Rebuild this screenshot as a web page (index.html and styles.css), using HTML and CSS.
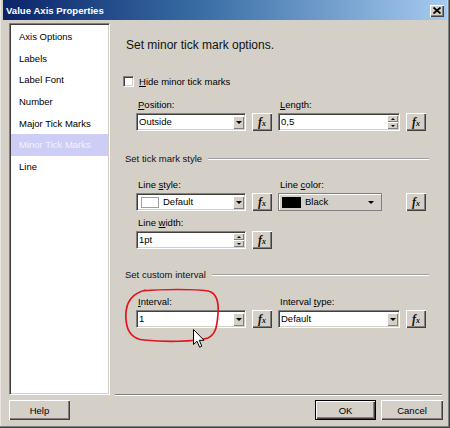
FILE: index.html
```html
<!DOCTYPE html>
<html>
<head>
<meta charset="utf-8">
<link rel="stylesheet" href="styles.css">
</head>
<body>
<div class="dialog">
  <div class="titlebar">
    <span class="title">Value Axis Properties</span>
    <span class="close"><svg width="8" height="7" viewBox="0 0 8 7"><path d="M0.5 0.5 L7.5 6.5 M7.5 0.5 L0.5 6.5" stroke="#000" stroke-width="1.8"/></svg></span>
  </div>
  <div class="main">
    <ul class="nav">
      <li>Axis Options</li>
      <li>Labels</li>
      <li>Label Font</li>
      <li>Number</li>
      <li>Major Tick Marks</li>
      <li class="sel">Minor Tick Marks</li>
      <li>Line</li>
    </ul>
    <div class="content">
      <div class="heading">Set minor tick mark options.</div>
      <div class="check"><span class="box"></span><span><u>H</u>ide minor tick marks</span></div>

      <div class="row r1">
        <div class="field">
          <div class="lbl"><u>P</u>osition:</div>
          <div class="combo"><span class="val">Outside</span><span class="drop"><i class="tri"></i></span></div>
        </div>
        <div class="fx"><span class="f">f</span><span class="x">x</span></div>
        <div class="field">
          <div class="lbl"><u>L</u>ength:</div>
          <div class="combo"><span class="val">0,5</span><span class="spin"><span class="half"><i class="up"></i></span><span class="half"><i class="tri"></i></span></span></div>
        </div>
        <div class="fx"><span class="f">f</span><span class="x">x</span></div>
      </div>

      <div class="section s1"><span>Set tick mark style</span></div>

      <div class="row r2">
        <div class="field">
          <div class="lbl">Line <u>s</u>tyle:</div>
          <div class="combo"><span class="swatch white"></span><span class="val">Default</span><span class="drop"><i class="tri"></i></span></div>
        </div>
        <div class="fx"><span class="f">f</span><span class="x">x</span></div>
        <div class="field">
          <div class="lbl">Line <u>c</u>olor:</div>
          <div class="colorpick"><span class="swatch black"></span><span class="val">Black</span><i class="tri"></i></div>
        </div>
        <div class="fx"><span class="f">f</span><span class="x">x</span></div>
      </div>

      <div class="row r3">
        <div class="field">
          <div class="lbl">Line <u>w</u>idth:</div>
          <div class="combo"><span class="val">1pt</span><span class="spin"><span class="half"><i class="up"></i></span><span class="half"><i class="tri"></i></span></span></div>
        </div>
        <div class="fx"><span class="f">f</span><span class="x">x</span></div>
      </div>

      <div class="section s2"><span>Set custom interval</span></div>

      <div class="row r4">
        <div class="field">
          <div class="lbl"><u>I</u>nterval:</div>
          <div class="combo"><span class="val">1</span><span class="drop"><i class="tri"></i></span></div>
        </div>
        <div class="fx"><span class="f">f</span><span class="x">x</span></div>
        <div class="field">
          <div class="lbl">Interval <u>t</u>ype:</div>
          <div class="combo"><span class="val">Default</span><span class="drop"><i class="tri"></i></span></div>
        </div>
        <div class="fx"><span class="f">f</span><span class="x">x</span></div>
      </div>
    </div>
  </div>
  <div class="footer">
    <div class="btn help">Help</div>
    <div class="spacer"></div>
    <div class="btn ok">OK</div>
    <div class="btn cancel">Cancel</div>
  </div>

  <svg class="annot" width="98" height="56" viewBox="0 0 98 56">
    <path d="M18 3 C40 1 70 1 84 3 C93 5 95 14 94 26 C93 38 92 46 84 50 C70 54 40 54 20 52 C8 51 3 44 2 32 C1 20 4 6 22 2" fill="none" stroke="#e0141e" stroke-width="1.7"/>
  </svg>
  <svg class="cursor" width="13" height="20" viewBox="0 0 13 20">
    <path d="M0.5 0.5 L0.5 15.5 L4 12.2 L6.6 18.2 L8.8 17.2 L6.3 11.3 L11 11.3 Z" fill="#fff" stroke="#000" stroke-width="1"/>
  </svg>
</div>
</body>
</html>
```

FILE: styles.css
```css
* { box-sizing: border-box; }
html, body { margin: 0; padding: 0; }
body {
  font-family: "Liberation Sans", Arial, sans-serif;
  font-size: 9.5px;
  color: #000;
  background: #d4d0c8;
}
.dialog {
  position: relative;
  width: 450px;
  height: 428px;
  background: #d4d0c8;
  padding: 0 3px 3px 3px;
  display: flex;
  flex-direction: column;
  box-shadow: inset -1px -1px #404040, inset -2px -2px #808080, inset 1px 0 #e8e6e0;
  overflow: hidden;
}
.titlebar {
  height: 20px;
  flex: none;
  background: linear-gradient(to right, #0a246a 0%, #3a6ea5 45%, #a6caf0 100%);
  display: flex;
  align-items: center;
  padding: 1px 2px 0 3px;
}
.title {
  color: #fff;
  font-weight: bold;
  font-size: 9.6px;
  flex: 1;
}
.close {
  width: 14px;
  height: 12px;
  background: #d4d0c8;
  box-shadow: inset 1px 1px #fff, inset -1px -1px #404040, inset -2px -2px #808080;
  display: flex;
  align-items: center;
  justify-content: center;
  margin-right: 1px;
}
.close svg { display: block; }
.main {
  flex: none;
  height: 375px;
  display: flex;
  gap: 5px;
  padding: 3px 5px 0 6px;
}
.nav {
  list-style: none;
  margin: 0;
  padding: 2px 0 0 0;
  width: 101px;
  height: 372px;
  background: #fff;
  border-top: 1px solid #808080;
  border-left: 1px solid #808080;
  border-right: 1px solid #fff;
  border-bottom: 1px solid #fff;
  box-shadow: inset 1px 1px #404040, inset -1px -1px #d4d0c8;
}
.nav li {
  height: 21.7px;
  line-height: 21.7px;
  padding-left: 8px;
  white-space: nowrap;
  margin: 0 1px 0 1px;
}
.nav li.sel {
  background: #cdcdf6;
  color: #f2f2ff;
}
.content {
  flex: 1;
  height: 372px;
  border-bottom: 1px solid #808080;
  box-shadow: 0 1px #fff;
  display: flex;
  flex-direction: column;
}
.heading {
  font-size: 12px;
  line-height: 14px;
  margin-top: 15px;
  padding-left: 11px;
  color: #111;
}
.check {
  display: flex;
  align-items: center;
  margin-top: 23px;
  padding-left: 8px;
  height: 12px;
  gap: 5px;
}
.box {
  width: 11px;
  height: 11px;
  background: #fff;
  border-top: 1px solid #808080;
  border-left: 1px solid #808080;
  border-right: 1px solid #fff;
  border-bottom: 1px solid #fff;
  box-shadow: inset 1px 1px #404040, inset -1px -1px #d4d0c8;
}
.row {
  display: grid;
  grid-template-columns: 110px 20px 122px 22px;
  column-gap: 6px;
  padding-left: 21px;
}
.r1 { margin-top: 12px; }
.r2 { margin-top: 14px; }
.r3 { margin-top: 6px; }
.r4 { margin-top: 15px; }
.field {
  display: flex;
  flex-direction: column;
}
.lbl {
  line-height: 12px;
  height: 12px;
  margin-bottom: 2px;
  padding-left: 2px;
  white-space: nowrap;
}
.combo {
  height: 18px;
  background: #fff;
  border-top: 1px solid #808080;
  border-left: 1px solid #808080;
  border-right: 1px solid #fff;
  border-bottom: 1px solid #fff;
  box-shadow: inset 1px 1px #404040, inset -1px -1px #d4d0c8;
  display: flex;
  align-items: center;
  padding: 1px 1px 1px 2px;
}
.val {
  flex: 1;
  white-space: nowrap;
  line-height: 14px;
}
.drop {
  width: 11px;
  height: 13px;
  background: #d4d0c8;
  box-shadow: inset 1px 1px #fff, inset -1px -1px #808080;
  display: flex;
  align-items: center;
  justify-content: center;
  flex: none;
}
.tri {
  display: block;
  width: 0;
  height: 0;
  border-left: 3px solid transparent;
  border-right: 3px solid transparent;
  border-top: 3px solid #000;
}
.up {
  display: block;
  width: 0;
  height: 0;
  border-left: 2px solid transparent;
  border-right: 2px solid transparent;
  border-bottom: 2px solid #000;
}
.spin .tri {
  border-left-width: 2px;
  border-right-width: 2px;
  border-top-width: 2px;
}
.spin {
  width: 11px;
  height: 14px;
  display: flex;
  flex-direction: column;
  flex: none;
}
.half {
  flex: 1;
  background: #d4d0c8;
  box-shadow: inset 1px 1px #fff, inset -1px -1px #808080;
  display: flex;
  align-items: center;
  justify-content: center;
}
.swatch {
  flex: none;
  width: 18px;
  height: 11px;
  margin-right: 4px;
}
.swatch.white {
  background: #fff;
  border: 1px solid #a0a0a0;
  margin-left: 2px;
}
.swatch.black {
  background: #000;
  width: 19px;
  height: 11px;
}
.colorpick {
  width: 104px;
  height: 18px;
  background: #d4d0c8;
  border: 1px solid #808080;
  box-shadow: inset 1px 1px #fff;
  display: flex;
  align-items: center;
  padding: 0 7px 0 3px;
}
.fx {
  align-self: end;
  width: 20px;
  height: 18px;
  background: #d4d0c8;
  box-shadow: inset 1px 1px #fff, inset -1px -1px #404040, inset -2px -2px #808080;
  display: flex;
  align-items: center;
  justify-content: center;
  font-family: "Liberation Serif", "Times New Roman", serif;
  font-style: italic;
  font-weight: bold;
  color: #111;
  padding-bottom: 1px;
}
.fx .f { font-size: 12px; line-height: 12px; }
.fx .x { font-size: 8px; line-height: 8px; margin-top: 4px; margin-left: 0; }
.section {
  display: flex;
  align-items: center;
  line-height: 12px;
  height: 12px;
  padding-left: 10px;
  margin-right: 13px;
  color: #111;
  white-space: nowrap;
}
.section::after {
  content: "";
  flex: 1;
  margin-left: 6px;
  border-top: 1px solid #a0a0a0;
  border-bottom: 1px solid #fff;
}
.s1 { margin-top: 22px; }
.s2 { margin-top: 20px; }
.footer {
  flex: none;
  display: flex;
  gap: 5px;
  padding: 5px 4px 0 6px;
}
.spacer { flex: 1; }
.btn {
  width: 61px;
  height: 20px;
  background: #d4d0c8;
  box-shadow: inset 1px 1px #fff, inset -1px -1px #404040, inset -2px -2px #808080;
  display: flex;
  align-items: center;
  justify-content: center;
}
.btn.ok {
  border: 1px solid #000;
  box-shadow: inset 1px 1px #fff, inset -1px -1px #404040, inset -2px -2px #808080;
}
.btn.cancel { width: 62px; }
.annot {
  position: absolute;
  left: 124px;
  top: 288px;
}
.cursor {
  position: absolute;
  left: 193px;
  top: 329px;
}
```
